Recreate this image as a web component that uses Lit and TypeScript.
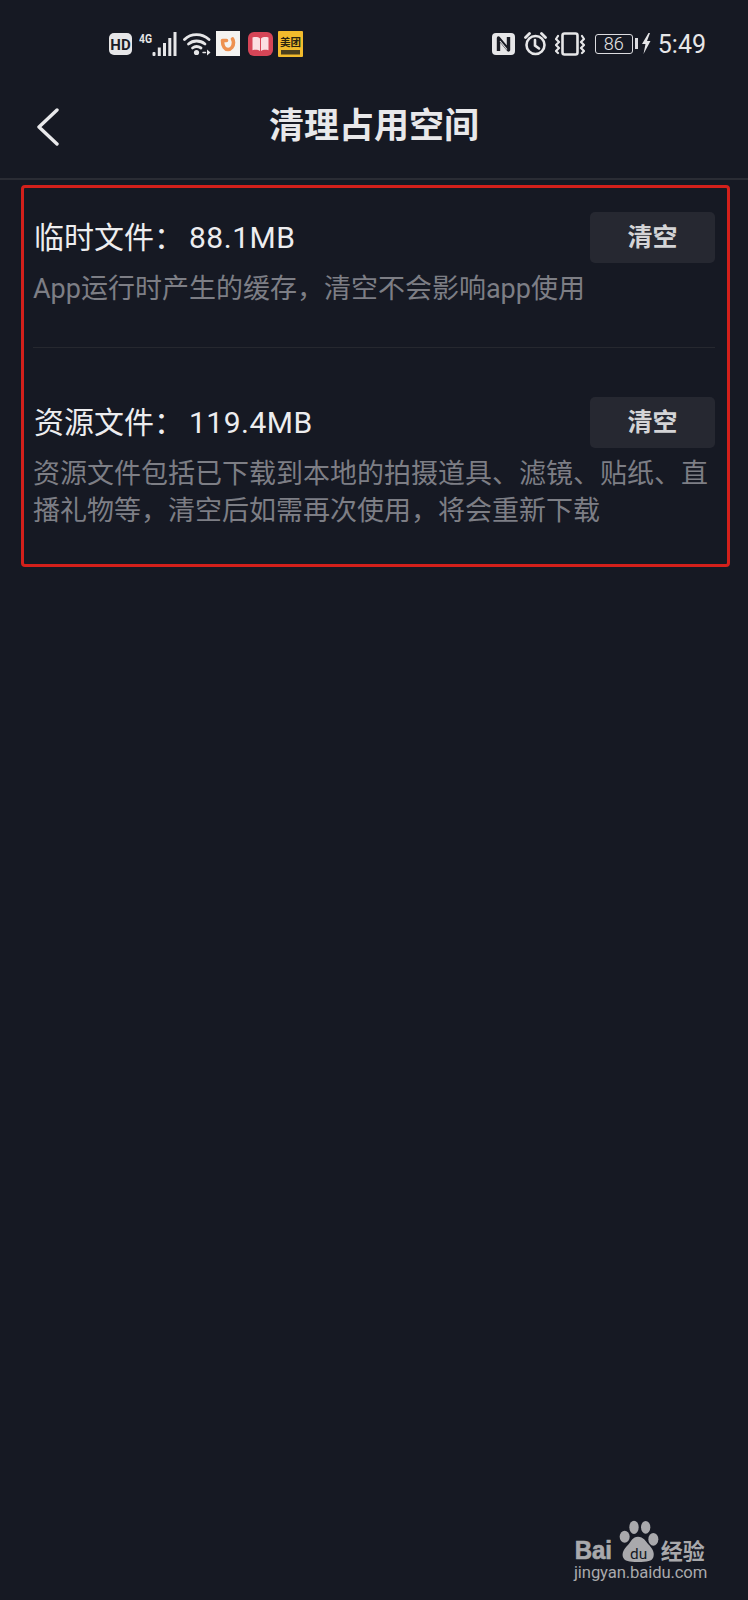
import { LitElement, html, css, svg } from "lit";
import { customElement } from "lit/decorators.js";

const items = [
  {
    title: "临时文件：",
    size: "88.1MB",
    desc: "App运行时产生的缓存，清空不会影响app使用",
  },
  {
    title: "资源文件：",
    size: "119.4MB",
    desc: "资源文件包括已下载到本地的拍摄道具、滤镜、贴纸、直播礼物等，清空后如需再次使用，将会重新下载",
  },
];

const hdIcon = svg`<svg class="ic" style="margin-right:7px" width="23" height="22" viewBox="0 0 23 22">
  <rect width="23" height="22" rx="5" fill="#e6e6e8"/>
  <text x="11.500" y="16.500" text-anchor="middle" font-size="15" font-weight="700" font-family="Roboto, sans-serif" fill="#1a1c25">HD</text>
</svg>`;

const signalIcon = svg`<svg class="ic" style="margin-right:6px" width="38" height="24" viewBox="0 0 38 24">
  <text x="0" y="11" font-size="13" font-weight="700" font-family="Roboto, sans-serif" fill="#e6e6e8" textLength="13" lengthAdjust="spacingAndGlyphs">4G</text>
  <rect x="13.500" y="20" width="3" height="4" rx="1" fill="#e6e6e8"/>
  <rect x="18.800" y="15.500" width="3" height="8.500" fill="#e6e6e8"/>
  <rect x="24" y="11" width="3" height="13" fill="#e6e6e8"/>
  <rect x="29.300" y="6" width="3" height="18" fill="#e6e6e8"/>
  <rect x="34.500" y="0" width="3" height="24" fill="#e6e6e8"/>
</svg>`;

const wifiIcon = svg`<svg class="ic" style="margin-right:5px" width="28" height="24" viewBox="0 0 28 24" fill="none" stroke="#e6e6e8" stroke-width="2.800" stroke-linecap="round">
  <path d="M1.500 7.500C8 1 19 1 26 7.500"/>
  <path d="M5.500 12C10 8 17 8 22 12"/>
  <path d="M9.500 16C12 14 15 14 18 16"/>
  <circle cx="13.500" cy="20.500" r="2.600" fill="#e6e6e8" stroke="none"/>
  <path d="M20 20.500h2.500" stroke-width="1.400"/>
  <path d="M24 17.500l3.500 3-3.500 3z" fill="#e6e6e8" stroke="none"/>
</svg>`;

const didiIcon = svg`<svg class="ic" style="margin-right:8px" width="24" height="25" viewBox="0 0 24 25">
  <rect width="24" height="25" fill="#f4f3f1"/>
  <path d="M6.500 9.500h4M6.500 9.500C6.500 15.500 9 18.500 12 18.500s5.500-3 5.500-7c0-1.500-.4-2.500-1-3.500" fill="none" stroke="#ee9150" stroke-width="3.600" stroke-linecap="round"/>
</svg>`;

const bookIcon = svg`<svg class="ic" style="margin-right:5px" width="25" height="24" viewBox="0 0 25 24">
  <rect width="25" height="24" rx="6" fill="#d64557"/>
  <path d="M4.500 5.500c3-.8 6-.4 7.500 1V19c-1.500-1.200-4.500-1.500-7.500-.8z" fill="#fbdfe2"/>
  <path d="M20.500 5.500c-3-.8-6-.4-7.500 1V19c1.500-1.200 4.500-1.500 7.500-.8z" fill="#fbdfe2"/>
</svg>`;

const meituanIcon = svg`<svg class="ic" width="25" height="26" viewBox="0 0 25 26">
  <rect width="25" height="26" rx="1" fill="#f2bb2c"/>
  <text x="12.500" y="15" text-anchor="middle" font-size="10.500" font-weight="700" font-family="'Noto Sans CJK SC', sans-serif" fill="#2a2410">美团</text>
  <rect x="3" y="19" width="19" height="4.500" fill="#4a3f1e"/>
</svg>`;

const nfcIcon = svg`<svg class="ic" style="margin-right:9px" width="23" height="22" viewBox="0 0 23 22">
  <rect width="23" height="22" rx="4" fill="#e6e6e8"/>
  <path d="M6.500 18V5L16.500 17V4" fill="none" stroke="#1a1c25" stroke-width="3.400" stroke-linejoin="round"/>
  <path d="M8 8l7 8.500" fill="none" stroke="#e6e6e8" stroke-width="1.100"/>
</svg>`;

const alarmIcon = svg`<svg class="ic" style="margin-right:8px" width="23" height="24" viewBox="0 0 23 24" fill="none" stroke="#e6e6e8" stroke-width="2.600" stroke-linecap="round">
  <circle cx="11.500" cy="13" r="9"/>
  <path d="M11 8v5.500l4 3"/>
  <path d="M1.500 5.500L5.500 1.500M21.500 5.500L17.500 1.500" stroke-width="2.800"/>
</svg>`;

const vibrateIcon = svg`<svg class="ic" style="margin-right:10px" width="30" height="24" viewBox="0 0 30 24" fill="none" stroke="#e6e6e8" stroke-width="2.200" stroke-linecap="round" stroke-linejoin="round">
  <rect x="7.500" y="1.500" width="15" height="21" rx="2" stroke-width="2.600"/>
  <path d="M3 4L1 7l3 3-3 3 3 3-3 3 2 2"/>
  <path d="M27 4l2 3-3 3 3 3-3 3 3 3-2 2"/>
</svg>`;

const boltIcon = svg`<svg class="ic" style="margin:0 7px 0 3px" width="10" height="21" viewBox="0 0 10 21">
  <path d="M7.500 0L1 11h3.500L2.500 21l7-13H6L9 0z" fill="#e6e6e8"/>
</svg>`;

const backIcon = svg`<svg width="24" height="38" viewBox="0 0 24 38" fill="none" stroke="#e9e9eb" stroke-width="3.400" stroke-linecap="round" stroke-linejoin="round">
  <path d="M21 2L3 19l18 17"/>
</svg>`;

const watermark = svg`<svg class="mark" width="200" height="110" viewBox="0 0 600 330" fill="#a9a9ac">
  <ellipse cx="258" cy="112" rx="14" ry="20"/>
  <ellipse cx="293" cy="112" rx="14" ry="19"/>
  <ellipse cx="230" cy="140" rx="15" ry="18"/>
  <ellipse cx="316" cy="148" rx="15" ry="19"/>
  <path d="M270 140c16 0 24 14 34 26 12 14 16 24 12 36-4 12-18 14-46 14s-40-2-45-14c-4-12 2-24 14-36 10-12 15-26 31-26z"/>
  <text x="272" y="206" text-anchor="middle" font-size="46" font-weight="400" font-family="Roboto, sans-serif" fill="#161923">du</text>
  <text x="80" y="208" font-size="76" font-weight="700" font-family="'Liberation Sans', sans-serif" textLength="112" lengthAdjust="spacingAndGlyphs" stroke="#a9a9ac" stroke-width="2">Bai</text>
  <text x="338" y="207" font-size="66" font-weight="700" font-family="'Noto Sans CJK SC', sans-serif">经验</text>
  <text x="78" y="265" font-size="50" font-family="Roboto, sans-serif" textLength="400">jingyan.baidu.com</text>
</svg>`;

@customElement("app-root")
export class AppRoot extends LitElement {
  static styles = css`
    :host {
      display: block;
      font-family: Roboto, "Noto Sans CJK SC", sans-serif;
    }

    .page {
      position: relative;
      height: 1600px;
      background: #161923;
      overflow: hidden;
    }

    .status {
      display: flex;
      justify-content: space-between;
      align-items: center;
      height: 87px;
      padding: 0 42px 0 109px;
      box-sizing: border-box;
    }

    .status-group {
      display: flex;
      align-items: center;
    }

    .ic {
      display: block;
      flex: none;
    }

    .battery {
      display: flex;
      align-items: center;
      justify-content: center;
      box-sizing: border-box;
      width: 38px;
      height: 20px;
      border: 1.5px solid #dcdce0;
      border-radius: 3px;
      color: #e6e6e8;
      font-size: 18px;
      font-weight: 300;
    }

    .nub {
      width: 3px;
      height: 11px;
      margin-left: 2px;
      background: #dcdce0;
    }

    .time {
      padding-top: 2px;
      color: #e6e6e8;
      font-size: 25px;
      line-height: 1;
    }

    .header {
      display: grid;
      grid-template-columns: 1fr auto 1fr;
      align-items: center;
      height: 93px;
      padding-bottom: 11px;
      box-sizing: border-box;
      border-bottom: 2px solid #2a2c34;
    }

    .back {
      padding-left: 36px;
      display: flex;
    }

    .header h1 {
      margin: 0;
      color: #e8e8ea;
      font-size: 35px;
      font-weight: 700;
      line-height: 1.2;
    }

    .box {
      margin: 5px 18px 0 21px;
      padding: 24px 12px 34px 9px;
      border: 3px solid #d3201b;
      border-radius: 4px;
    }

    .row-top {
      display: flex;
      align-items: center;
      justify-content: space-between;
      height: 51px;
    }

    .name {
      margin-left: 1px;
      color: #ededef;
      font-size: 30px;
      line-height: 40px;
    }

    .size {
      margin-left: 5px;
      letter-spacing: 0.5px;
    }

    .clear {
      width: 125px;
      height: 51px;
      border-radius: 5px;
      background: #262831;
      color: #d4d4d6;
      font-size: 25px;
      font-weight: 700;
      line-height: 51px;
      text-align: center;
    }

    .desc {
      margin: 8px 0 0;
      color: #7d7e85;
      font-size: 27px;
      line-height: 37px;
    }

    .divider {
      height: 1px;
      margin: 39px 0 49px;
      background: #26282f;
    }

    .mark {
      position: absolute;
      left: 548px;
      top: 1490px;
    }
  `;

  render() {
    return html`
      <div class="page">
        <div class="status">
          <div class="status-group">
            ${hdIcon}${signalIcon}${wifiIcon}${didiIcon}${bookIcon}${meituanIcon}
          </div>
          <div class="status-group">
            ${nfcIcon}${alarmIcon}${vibrateIcon}
            <div class="battery">86</div>
            <div class="nub"></div>
            ${boltIcon}
            <div class="time">5:49</div>
          </div>
        </div>
        <div class="header">
          <div class="back">${backIcon}</div>
          <h1>清理占用空间</h1>
          <div></div>
        </div>
        <div class="box">
          ${items.map(
            (item, i) => html`
              ${i > 0 ? html`<div class="divider"></div>` : ""}
              <div class="row-top">
                <div class="name">${item.title}<span class="size">${item.size}</span></div>
                <div class="clear">清空</div>
              </div>
              <p class="desc">${item.desc}</p>
            `
          )}
        </div>
        ${watermark}
      </div>
    `;
  }
}
